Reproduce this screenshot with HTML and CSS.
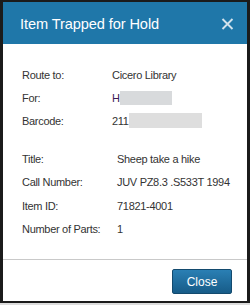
FILE: index.html
```html
<!DOCTYPE html>
<html lang="en">
<head>
	<meta charset="utf-8">
	<title>Item Trapped for Hold</title>
	<link rel="stylesheet" href="styles.css">
</head>
<body>
	<div class="modal">
		<div class="modal-head">
			<h1>Item Trapped for Hold</h1>
			<a href="#" class="close-x"><svg width="13" height="12" viewBox="0 0 13 12"><path d="M1.5 1L11.5 11M11.5 1L1.5 11" stroke="#d2e2ec" stroke-width="1.9" fill="none"/></svg></a>
		</div>
		<div class="modal-body">
			<dl class="info info-route">
				<dt>Route to:</dt><dd>Cicero Library</dd>
				<dt>For:</dt><dd><span class="initial">H</span><span class="blur blur-name"></span></dd>
				<dt>Barcode:</dt><dd>211<span class="blur blur-code"></span></dd>
			</dl>
			<dl class="info info-item">
				<dt>Title:</dt><dd>Sheep take a hike</dd>
				<dt>Call Number:</dt><dd>JUV PZ8.3 .S533T 1994</dd>
				<dt>Item ID:</dt><dd>71821-4001</dd>
				<dt>Number of Parts:</dt><dd>1</dd>
			</dl>
		</div>
		<div class="modal-foot">
			<button class="btn">Close</button>
		</div>
	</div>
</body>
</html>
```
FILE: styles.css
```css
*{
	margin:0;
	padding:0;
	box-sizing:border-box;
}
html{
	background:#dcdcdc;
}
body{
	width:250px;
	height:305px;
	font-family:"Liberation Sans",Arial,sans-serif;
	color:#333;
}
.modal{
	width:250px;
	height:303px;
	border:solid #1b1b1b;
	border-width:2px 3px;
	background:#fff;
	display:flex;
	flex-direction:column;
}
.modal-head{
	height:42px;
	background:#1f77a9;
	display:flex;
	align-items:center;
	justify-content:space-between;
	padding:0 12px 0 17px;
}
.modal-head h1{
	font-size:14.6px;
	font-weight:normal;
	color:#fff;
	letter-spacing:-0.1px;
	padding-top:1px;
}
.close-x{
	display:flex;
	width:16px;
	height:16px;
	align-items:center;
	justify-content:center;
	margin-top:2px;
}
.modal-body{
	flex:1;
	padding:19px 0 0 19px;
}
.info{
	display:grid;
	font-size:11px;
	letter-spacing:-0.3px;
	color:#333;
}
.info dt,.info dd{
	display:flex;
	align-items:center;
}
.info-route{
	grid-template-columns:90px 1fr;
	grid-auto-rows:23px;
}
.info-item{
	grid-template-columns:95px 1fr;
	grid-auto-rows:23.5px;
	margin-top:15px;
}
.initial{
	color:#3b1a55;
}
.blur{
	display:inline-block;
	background:#d8dadc;
}
.blur-name{
	width:52px;
	height:14px;
}
.blur-code{
	width:73px;
	height:15px;
	background:#dedede;
}
.modal-foot{
	height:42px;
	border-top:1px solid #c9c9c9;
	display:flex;
	justify-content:flex-end;
	padding:9px 15px 0 0;
}
.btn{
	width:60px;
	height:25px;
	border:1px solid #134a6e;
	border-radius:2px;
	background:linear-gradient(#2a7fb4,#175c88);
	color:#fff;
	font-family:"Liberation Sans",Arial,sans-serif;
	font-size:12px;
}
```
